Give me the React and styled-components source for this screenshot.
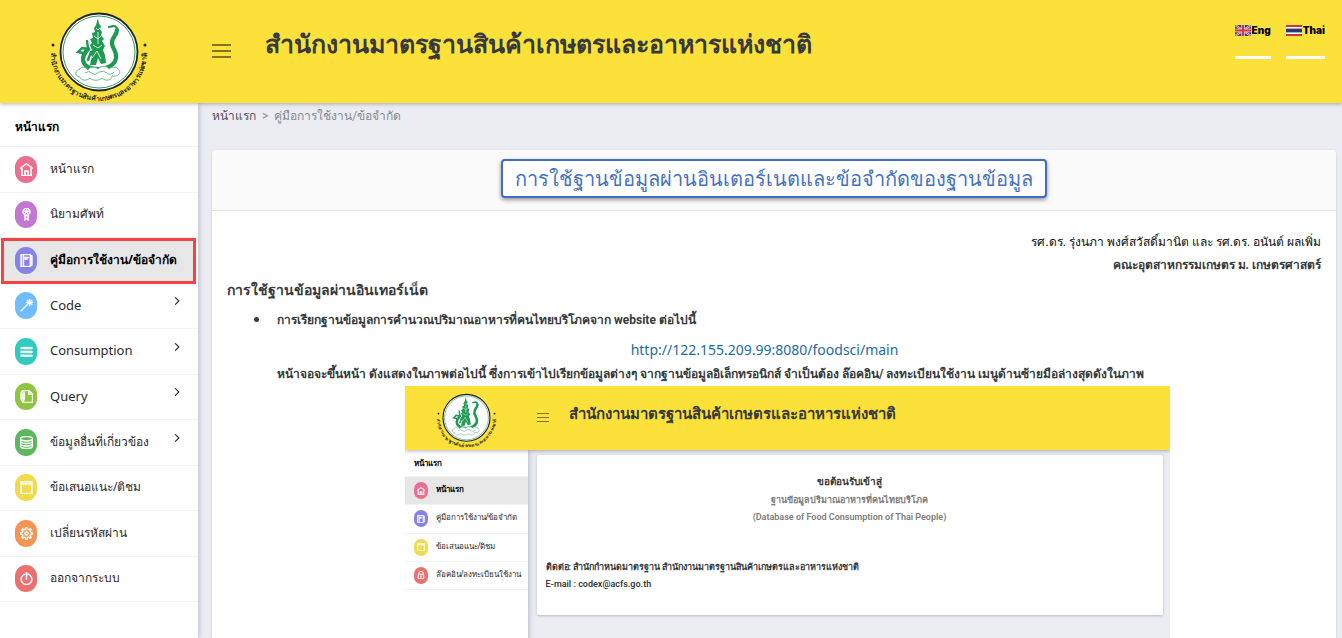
import React from 'react';
import styled, { createGlobalStyle } from 'styled-components';
import {
  TfiHome, TfiMedall, TfiAgenda, TfiWand, TfiMenu, TfiWrite, TfiServer,
  TfiNotepad, TfiSettings, TfiPowerOff, TfiAngleRight, TfiLock,
} from 'react-icons/tfi';

const Global = createGlobalStyle`
  * { box-sizing: border-box; }
  body {
    margin: 0;
    background: #ecedf3;
    color: #373a3c;
    font-family: Roboto, "Noto Sans", "Liberation Sans", sans-serif;
    font-size: 14px;
  }
  a { text-decoration: none; color: inherit; }
  ul, h1, h2, p { margin: 0; padding: 0; list-style: none; }
`;

const Page = styled.div`
  display: flex;
  flex-direction: column;
  height: 100vh;
  overflow: hidden;
`;

const Header = styled.header`
  display: flex;
  flex: none;
  position: relative;
  z-index: 2;
  height: ${(p) => (p.$small ? 64 : 103)}px;
  background: #fce13b;
  box-shadow: 0 1px 4px rgba(60, 60, 100, 0.4);
`;

const Brand = styled.a`
  display: flex;
  flex: none;
  justify-content: center;
  width: ${(p) => (p.$small ? 123 : 197)}px;
  padding-top: ${(p) => (p.$small ? 5 : 8)}px;
`;

const MenuButton = styled.button`
  display: flex;
  flex: none;
  flex-direction: column;
  justify-content: space-between;
  width: ${(p) => (p.$small ? 12 : 19)}px;
  height: ${(p) => (p.$small ? 9 : 14)}px;
  margin: ${(p) => (p.$small ? '27px 0 0 9px' : '44px 0 0 15px')};
  padding: 0;
  border: 0;
  background: none;
`;

const Bar = styled.span`
  height: ${(p) => (p.$small ? 1 : 2)}px;
  background: #85751f;
`;

const SiteTitle = styled.h1`
  flex: 1;
  margin-left: ${(p) => (p.$small ? 20 : 34)}px;
  color: #373a3c;
  font-size: ${(p) => (p.$small ? 15 : 25)}px;
  font-weight: 700;
  line-height: ${(p) => (p.$small ? 56 : 90)}px;
  white-space: nowrap;
`;

const Languages = styled.nav`
  display: flex;
  gap: 15px;
  padding: 24px 17px 0 0;
`;

const Language = styled.a`
  display: flex;
  gap: 1px;
  align-items: center;
  height: 35px;
  padding-bottom: 20px;
  border-bottom: 3px solid #fff;
  color: #000;
  font: 900 10px/14px Inter, "Liberation Sans", sans-serif;
`;

const Columns = styled.div`
  display: flex;
  flex: 1;
  min-height: 0;
`;

const Sidebar = styled.aside`
  flex: none;
  position: relative;
  z-index: 1;
  width: ${(p) => (p.$small ? 123 : 198)}px;
  background: #fff;
  box-shadow: 1px 0 5px rgba(60, 60, 100, 0.3);
`;

const SidebarHeading = styled.h2`
  height: ${(p) => (p.$small ? 27 : 44)}px;
  padding-left: ${(p) => (p.$small ? 9 : 15)}px;
  border-bottom: 1px solid #f3f3f5;
  color: #000;
  font-size: ${(p) => (p.$small ? 8 : 12)}px;
  line-height: ${(p) => (p.$small ? 28 : 48)}px;
`;

const Menu = styled.ul`
  display: grid;
  grid-template-columns: minmax(0, 1fr);
  grid-auto-rows: 1fr;
  height: ${(p) => (p.$small ? 113 : 455)}px;
`;

const MenuLink = styled.a`
  display: flex;
  align-items: center;
  gap: ${(p) => (p.$small ? 8 : 13)}px;
  height: 100%;
  padding: ${(p) => (p.$small ? '0 0 0 9px' : '0 17px 0 15px')};
  border-bottom: 1px solid #f3f3f5;
  background: ${(p) => (p.$active ? '#e7e7e7' : 'transparent')};
  color: ${(p) => (p.$active ? '#000' : '#2b2b2b')};
  font-family: "Noto Sans", sans-serif;
  font-weight: ${(p) => (p.$active ? 700 : 400)};
  white-space: nowrap;
  ${(p) => p.$outlined && `
    margin: 0 2px 0 1px;
    padding: 0 0 0 11px;
    border: 3px solid #f94144;
  `}
`;

const Badge = styled.span`
  display: grid;
  flex: none;
  place-items: center;
  width: ${(p) => (p.$small ? 14 : 22)}px;
  height: ${(p) => (p.$small ? 17 : 27)}px;
  border-radius: 11px;
  background: ${(p) => p.$color};
  color: #fff;
  font-size: ${(p) => (p.$small ? 8 : 13)}px;

  svg {
    stroke: currentColor;
    stroke-width: 1px;
  }
`;

const Label = styled.span`
  flex: 1;
  padding-bottom: 2px;
  font-size: ${(p) => (p.$small ? 8 : p.$latin ? 13 : 12)}px;
`;

const Arrow = styled(TfiAngleRight)`
  width: 8px;
  height: 8px;
  margin-bottom: 9px;
  stroke: currentColor;
  stroke-width: 2px;
`;

const Main = styled.main`
  display: flex;
  flex: 1;
  flex-direction: column;
  min-width: 0;
  padding: 0 6px 0 14px;
`;

const Breadcrumb = styled.nav`
  display: flex;
  flex: none;
  gap: 6px;
  height: 47px;
  color: #818a91;
  font-size: 12px;
  line-height: 26px;
`;

const Crumb = styled.a`
  color: #5b4a62;
`;

const Card = styled.section`
  flex: 1;
  min-height: 0;
  overflow: hidden;
  border-radius: 4px 4px 0 0;
  background: #fff;
  box-shadow: 0 1px 3px rgba(60, 60, 100, 0.2);
`;

const CardHeader = styled.div`
  display: flex;
  justify-content: center;
  height: 61px;
  padding-top: 9px;
  border-bottom: 1px solid #e5e5e5;
  background: #fafafa;
`;

const CardTitle = styled.h2`
  height: 39px;
  padding: 0 12px;
  border: 2px solid #3f6dc9;
  border-radius: 4px;
  background: #fff;
  box-shadow: 0 2px 4px rgba(0, 0, 0, 0.4);
  color: #4472c4;
  font-size: 20px;
  font-weight: 400;
  line-height: 36px;
  white-space: nowrap;
`;

const Article = styled.div`
  padding: 20px 15px 0;
`;

const Author = styled.p`
  color: ${(p) => (p.$strong ? '#373a3c' : '#111')};
  font-size: 12px;
  font-weight: ${(p) => (p.$strong ? 700 : 400)};
  line-height: 23px;
  text-align: right;
`;

const SectionTitle = styled.h2`
  margin-top: 1px;
  font-size: 14px;
  line-height: 24px;
`;

const Steps = styled.ul`
  padding-left: 50px;
  font-size: 12px;
  font-weight: 700;
`;

const Step = styled.li`
  display: list-item;
  position: relative;
  line-height: 36px;
  white-space: nowrap;

  &::before {
    content: '';
    position: absolute;
    top: 15px;
    left: -23px;
    width: 5px;
    height: 5px;
    border-radius: 50%;
    background: #373a3c;
  }
`;

const SiteLink = styled.a`
  display: block;
  padding-right: 69px;
  color: #1d6ba8;
  font: 400 14px/24px "Noto Sans", sans-serif;
  text-align: center;
`;

const Note = styled.p`
  line-height: 24px;
  white-space: nowrap;
`;

const PreviewRow = styled.div`
  padding-left: 26px;
`;

const Preview = styled.figure`
  display: flex;
  flex-direction: column;
  width: 765px;
  height: 280px;
  margin: 0 auto;
  overflow: hidden;
  background: #ecedf3;
`;

const PreviewCard = styled.div`
  flex: 1;
  height: 160px;
  margin: 5px 7px 0 9px;
  padding: 17px 9px;
  border-radius: 2px;
  background: #fff;
  box-shadow: 0 1px 3px rgba(60, 60, 100, 0.3);
  font-size: 9px;
  line-height: 17px;
`;

const Welcome = styled.div`
  margin-bottom: 33px;
  color: #7c7c7c;
  font-weight: 600;
  text-align: center;
`;

const WelcomeTitle = styled.p`
  color: #373a3c;
  font-size: 10px;
  font-weight: 700;
  line-height: 20px;
`;

const Contact = styled.p`
  font-weight: 600;
`;

function Emblem({ size, id }) {
  return (
    <svg width={size} height={size} viewBox="0 0 100 100" role="img" aria-label="มกอช.">
      <circle cx="50" cy="44" r="38.5" fill="#fff" stroke="#222" strokeWidth="1.8" />
      <circle cx="50" cy="44" r="36" fill="none" stroke="#2c9c5c" strokeWidth="1" />
      <path
        d="M49 10l1 6 2 2-1 3 2 3-1 3 3 4-2 2 3 5-2 4 2 5 1 8-5 1-3-6-2 7-6 0 2-9-3-2 3-4-2-5 2-2-2-4 3-1-1-5 3-1-1-4 2-3z"
        fill="#1f9a53"
      />
      <g fill="none" stroke="#1f9a53" strokeLinecap="round">
        <path d="M60 19l5-1q4 1 3 5" strokeWidth="2.2" />
        <path d="M68 22c0 6-6 7-5 14 1 5 5 8 4 14-1 7-9 11-17 11-9 0-16-3-16-10 0-5 3-7 5-10" strokeWidth="4.2" />
        <path d="M40 41l-7-1-4 4 5 1M39 40l-1-7M42 44l-3 8" strokeWidth="2.4" />
      </g>
      <path d="M47 20l2 2 2-2M45 28l4 3 3-3M44 37l5 3 4-3M43 50l5-7 4 8M49 24v12" fill="none" stroke="#fff" strokeWidth="0.8" />
      <path
        d="M31 61c-5 1-6 7 0 8 1 4 7 4 10 1 3 3 9 3 12 0 4 4 10 2 10-2 7 1 10-4 6-7-2-3-7-2-9 0-3-4-9-3-11 0-4-3-9-2-10 1-2-3-7-4-8-1zM36 65q4-3 7 0t7-1q5-2 8 1t7-1"
        fill="#fff" stroke="#67b98a" strokeWidth="1"
      />
      <circle cx="4" cy="37" r="1.5" fill="#222" />
      <circle cx="96" cy="37" r="1.5" fill="#222" />
      <path id={id} d="M2 40A48.2 48.2 0 1 0 98 40" fill="none" />
      <text fontSize="6.8" fontWeight="700" fill="#2a270f" textAnchor="middle">
        <textPath href={`#${id}`} startOffset="50%">สำนักงานมาตรฐานสินค้าเกษตรและอาหารแห่งชาติ</textPath>
      </text>
    </svg>
  );
}

function UkFlag() {
  return (
    <svg width="16" height="11" viewBox="0 0 16 11" aria-hidden="true">
      <rect width="16" height="11" fill="#34427f" />
      <path d="M0 0l16 11M16 0L0 11" stroke="#e8dfe4" strokeWidth="2" />
      <path d="M0 0l16 11M16 0L0 11" stroke="#d5404d" strokeWidth="1" />
      <path d="M8 0v11M0 5.5h16" stroke="#e8dfe4" strokeWidth="3.4" />
      <path d="M8 0v11M0 5.5h16" stroke="#d5303f" strokeWidth="2" />
    </svg>
  );
}

function ThaiFlag() {
  return (
    <svg width="16" height="11" viewBox="0 0 16 11" aria-hidden="true">
      <rect width="16" height="11" fill="#c9373f" />
      <rect y="2" width="16" height="7" fill="#fff" />
      <rect y="3.6" width="16" height="3.8" fill="#2d3570" />
    </svg>
  );
}

function Burger({ small }) {
  return (
    <MenuButton $small={small} type="button" aria-label="Menu">
      <Bar $small={small} /><Bar $small={small} /><Bar $small={small} />
    </MenuButton>
  );
}

const items = [
  { label: 'หน้าแรก', icon: TfiHome, color: '#ea6f90' },
  { label: 'นิยามศัพท์', icon: TfiMedall, color: '#c377d3' },
  { label: 'คู่มือการใช้งาน/ข้อจำกัด', icon: TfiAgenda, color: '#8583e6', active: true },
  { label: 'Code', icon: TfiWand, color: '#6fbcff', more: true, latin: true },
  { label: 'Consumption', icon: TfiMenu, color: '#2fcbbd', more: true, latin: true },
  { label: 'Query', icon: TfiWrite, color: '#8ec63f', more: true, latin: true },
  { label: 'ข้อมูลอื่นที่เกี่ยวข้อง', icon: TfiServer, color: '#5cb85c', more: true },
  { label: 'ข้อเสนอแนะ/ติชม', icon: TfiNotepad, color: '#f1da4c' },
  { label: 'เปลี่ยนรหัสผ่าน', icon: TfiSettings, color: '#f59453' },
  { label: 'ออกจากระบบ', icon: TfiPowerOff, color: '#ea716f' },
];

const previewItems = [
  { label: 'หน้าแรก', icon: TfiHome, color: '#ea6f90', active: true },
  { label: 'คู่มือการใช้งาน/ข้อจำกัด', icon: TfiAgenda, color: '#8583e6' },
  { label: 'ข้อเสนอแนะ/ติชม', icon: TfiNotepad, color: '#f1da4c' },
  { label: 'ล๊อคอิน/ลงทะเบียนใช้งาน', icon: TfiLock, color: '#ea716f' },
];

function SideNav({ entries, small }) {
  return (
    <Sidebar $small={small}>
      <SidebarHeading $small={small}>หน้าแรก</SidebarHeading>
      <Menu $small={small}>
        {entries.map(({ label, icon: Icon, color, active, more, latin }) => (
          <li key={label}>
            <MenuLink href="#" $active={active} $outlined={active && !small} $small={small}>
              <Badge $color={color} $small={small}><Icon /></Badge>
              <Label $latin={latin} $small={small}>{label}</Label>
              {more && <Arrow />}
            </MenuLink>
          </li>
        ))}
      </Menu>
    </Sidebar>
  );
}

const siteName = 'สำนักงานมาตรฐานสินค้าเกษตรและอาหารแห่งชาติ';

export default function App() {
  return (
    <Page>
      <Global />
      <Header>
        <Brand href="#"><Emblem size={100} id="ring" /></Brand>
        <Burger />
        <SiteTitle>{siteName}</SiteTitle>
        <Languages>
          <Language href="#"><UkFlag />Eng</Language>
          <Language href="#"><ThaiFlag />Thai</Language>
        </Languages>
      </Header>
      <Columns>
        <SideNav entries={items} />
        <Main>
          <Breadcrumb>
            <Crumb href="#">หน้าแรก</Crumb>
            <span>&gt;</span>
            <span>คู่มือการใช้งาน/ข้อจำกัด</span>
          </Breadcrumb>
          <Card>
            <CardHeader>
              <CardTitle>การใช้ฐานข้อมูลผ่านอินเตอร์เนตและข้อจำกัดของฐานข้อมูล</CardTitle>
            </CardHeader>
            <Article>
              <Author>รศ.ดร. รุ่งนภา พงศ์สวัสดิ์มานิต และ รศ.ดร. อนันต์ ผลเพิ่ม</Author>
              <Author $strong>คณะอุตสาหกรรมเกษตร ม. เกษตรศาสตร์</Author>
              <SectionTitle>การใช้ฐานข้อมูลผ่านอินเทอร์เน็ต</SectionTitle>
              <Steps>
                <Step>การเรียกฐานข้อมูลการคำนวณปริมาณอาหารที่คนไทยบริโภคจาก website ต่อไปนี้</Step>
                <li>
                  <SiteLink href="#">http://122.155.209.99:8080/foodsci/main</SiteLink>
                  <Note>หน้าจอจะขึ้นหน้า ดังแสดงในภาพต่อไปนี้ ซึ่งการเข้าไปเรียกข้อมูลต่างๆ จากฐานข้อมูลอิเล็กทรอนิกส์ จำเป็นต้อง ล๊อคอิน/ ลงทะเบียนใช้งาน เมนูด้านซ้ายมือล่างสุดดังในภาพ</Note>
                </li>
              </Steps>
              <PreviewRow>
                <Preview>
                  <Header as="div" $small>
                    <Brand as="div" $small><Emblem size={61} id="ring-small" /></Brand>
                    <Burger small />
                    <SiteTitle as="div" $small>{siteName}</SiteTitle>
                  </Header>
                  <Columns>
                    <SideNav entries={previewItems} small />
                    <PreviewCard>
                      <Welcome>
                        <WelcomeTitle>ขอต้อนรับเข้าสู่</WelcomeTitle>
                        <p>ฐานข้อมูลปริมาณอาหารที่คนไทยบริโภค</p>
                        <p>(Database of Food Consumption of Thai People)</p>
                      </Welcome>
                      <Contact>ติดต่อ: สำนักกำหนดมาตรฐาน สำนักงานมาตรฐานสินค้าเกษตรและอาหารแห่งชาติ</Contact>
                      <Contact>E-mail : codex@acfs.go.th</Contact>
                    </PreviewCard>
                  </Columns>
                </Preview>
              </PreviewRow>
            </Article>
          </Card>
        </Main>
      </Columns>
    </Page>
  );
}
